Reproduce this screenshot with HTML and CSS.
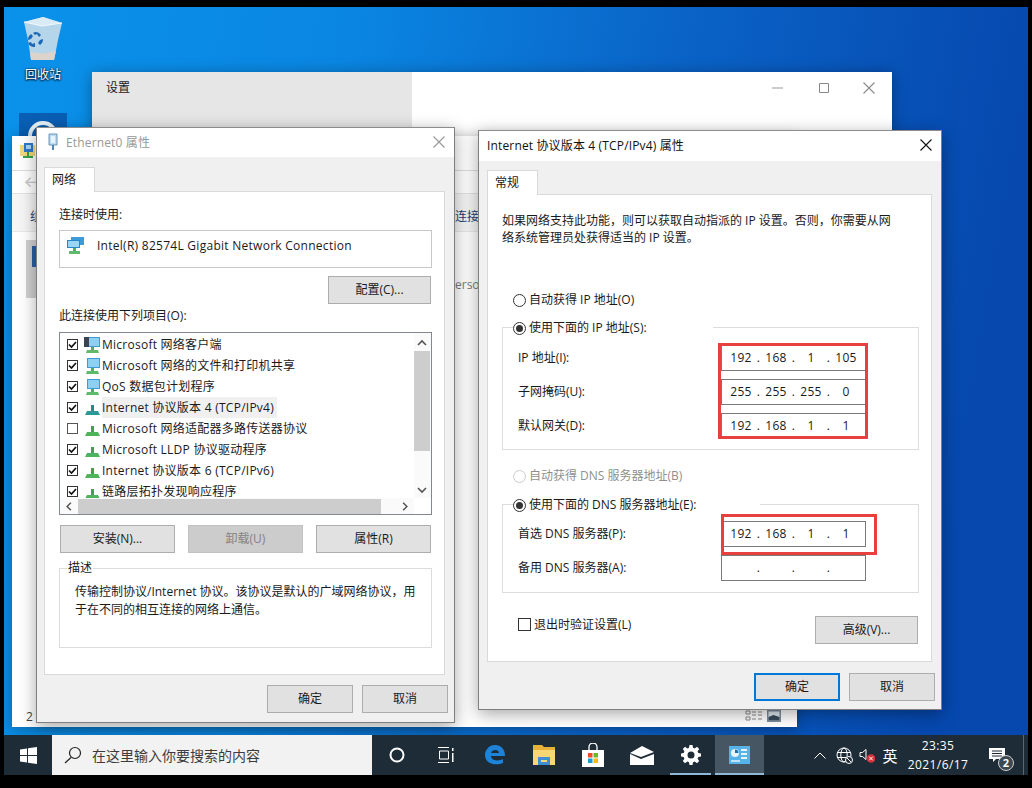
FILE: index.html
```html
<!DOCTYPE html>
<html lang="zh-CN">
  <head>
    <meta charset="UTF-8" />
    <title>Internet 协议版本 4 属性</title>
    <link rel="stylesheet" href="styles.css">
  </head>
  <body>
    <svg class="defs" width="0" height="0">
      <symbol id="i-proto" viewBox="0 0 16 16">
        <path d="M7 5h3v6H7z" fill="#3fa34d" />
        <path d="M3 11h11l2 4H1z" fill="#4fb35c" />
      </symbol>
      <symbol id="i-proto-on" viewBox="0 0 16 16">
        <path d="M7 5h3v6H7z" fill="#1f8f8a" />
        <path d="M3 11h11l2 4H1z" fill="#2a9a98" />
      </symbol>
      <symbol id="i-svc" viewBox="0 0 16 16">
        <path d="M3 0h13v10H3z" fill="#3d9bd8" />
        <path d="M4 1h11v8H4z" fill="#8ed0f2" />
        <path d="M7 10h3v3H7z" fill="#58a868" />
        <path d="M3 13h11l1 3H2z" fill="#5fbb6c" />
      </symbol>
      <symbol id="i-client" viewBox="0 0 16 16">
        <path d="M3 0h13v10H3z" fill="#3d9bd8" />
        <path d="M4 1h11v8H4z" fill="#8ed0f2" />
        <path d="M0 0h5v10H0z" fill="#3a4450" />
        <path d="M7 10h3v3H7z" fill="#58a868" />
        <path d="M3 13h11l1 3H2z" fill="#5fbb6c" />
      </symbol>
      <symbol id="i-up" viewBox="0 0 16 16"><path d="M4 10l4-4 4 4" fill="none" stroke="#555" stroke-width="1.6" /></symbol>
      <symbol id="i-down" viewBox="0 0 16 16"><path d="M4 6l4 4 4-4" fill="none" stroke="#555" stroke-width="1.6" /></symbol>
      <symbol id="i-left" viewBox="0 0 16 16"><path d="M10 4l-4 4 4 4" fill="none" stroke="#555" stroke-width="1.6" /></symbol>
      <symbol id="i-right" viewBox="0 0 16 16"><path d="M6 4l4 4-4 4" fill="none" stroke="#555" stroke-width="1.6" /></symbol>
      <symbol id="i-check" viewBox="0 0 11 11"><path d="M2 5.500l2.500 2.500L9 3" fill="none" stroke="#111" stroke-width="1.7" /></symbol>
      <symbol id="i-x" viewBox="0 0 14 14"><path d="M1.500 1.500l11 11M12.500 1.500l-11 11" fill="none" stroke="currentColor" stroke-width="1.1" /></symbol>
    </svg>

    <div class="desktop">
      <div class="desk-item recycle">
        <svg width="40" height="44" viewBox="0 0 40 44">
          <path d="M1 6L20 1l19 6-4 17-4 20H8L5 24z" fill="#b5d6ea" />
          <path d="M1 6l18 4 20-3-19-6z" fill="#d8ebf6" />
          <path d="M1 6l18 4 20-3" fill="none" stroke="#eef7fc" stroke-width="1.200" />
          <path d="M7 36c8 2 17 2 26-1l-2 9H8z" fill="#dcd3ca" />
          <path d="M12 16a7 7 0 0 1 6 3l-2 2-2-3-2 1-2-2zM20 23a7 7 0 0 1-3 6l-2-2 2-3zM12 31a7 7 0 0 1-7-4l3-1 1 2 3-1zM5 24a7 7 0 0 1 3-6l2 2-2 3z" fill="#1c68b8" />
        </svg>
        <span>回收站</span>
      </div>
      <div class="desk-item selected">
        <svg width="30" height="30" viewBox="0 0 30 30"><circle cx="15" cy="15" r="13" fill="none" stroke="#e8f4fb" stroke-width="4" /></svg>
      </div>

      <!-- windows behind the dialogs -->
      <div class="window settings">
        <div class="settings-side"><span>设置</span></div>
        <div class="settings-main">
          <div class="caption-btns">
            <svg width="16" height="16" viewBox="0 0 16 16"><path d="M2 8h11" stroke="#999" /></svg>
            <svg width="16" height="16" viewBox="0 0 16 16"><path d="M3.500 3.500h9v9h-9z" fill="none" stroke="#888" /></svg>
            <svg class="caption-x" width="14" height="14"><use href="#i-x" /></svg>
          </div>
        </div>
      </div>

      <div class="window panel">
        <div class="panel-title">
          <svg width="16" height="16" viewBox="0 0 16 16">
            <path d="M0 2h15v11H0z" fill="#f3d77a" />
            <path d="M4 0h9v9H4z" fill="#2f78c8" />
            <path d="M6 2h5v4H6z" fill="#a9d8f5" />
            <path d="M7 9h2v4H7z" fill="#37a34a" />
            <path d="M3 13h10v2H3z" fill="#37a34a" />
          </svg>
        </div>
        <div class="panel-nav"><span class="back">←</span></div>
        <div class="panel-band"><span>组</span><span class="band-link">连接此</span></div>
        <div class="panel-body">
          <div class="panel-thumb"><i></i></div>
          <span class="panel-person">erson</span>
        </div>
        <div class="panel-status">
          <span>2</span>
          <div class="view-btns">
            <svg width="18" height="12" viewBox="0 0 18 12"><path d="M1 1h4v3H1zM1 7h4v3H1z M7 2h4M13 2h4M7 5h4M13 5h4M7 9h4M13 9h4" fill="none" stroke="#8a8a8a" /></svg>
            <svg width="14" height="12" viewBox="0 0 14 12"><path d="M0 0h14v12H0z" fill="#7d8d9e" /><path d="M1.500 1.500h11v9h-11z" fill="#dfe8ef" /><path d="M1.500 7l5-2 6 2v3.500h-11z" fill="#39495a" /></svg>
          </div>
        </div>
      </div>

      <!-- Ethernet0 dialog -->
      <div class="window dialog eth">
        <div class="dialog-title inactive">
          <svg width="12" height="18" viewBox="0 0 12 18">
            <path d="M2 1h8v11H2z" fill="#b9dcf2" stroke="#6a94b4" />
            <path d="M4 3h4v7H4z" fill="#e6f4fc" />
            <path d="M5 12h2v5H5z" fill="#4f86b8" />
          </svg>
          <span class="title-text">Ethernet0 属性</span>
          <svg class="title-x" width="14" height="14"><use href="#i-x" /></svg>
        </div>
        <div class="dialog-body">
          <div class="tab">网络</div>
          <div class="page eth-page">
            <div class="label">连接时使用:</div>
            <div class="adapter">
              <svg width="18" height="17" viewBox="0 0 18 17">
                <path d="M4 0h13v8H4z" fill="#3d9bd8" />
                <path d="M0 3h13v8H0z" fill="#2a86c8" />
                <path d="M1 4h11v6H1z" fill="#9ad6f4" />
                <path d="M6 11h3v3H6z" fill="#58a868" />
                <path d="M2 14h11v3H2z" fill="#5fbb6c" />
              </svg>
              <span>Intel(R) 82574L Gigabit Network Connection</span>
            </div>
            <div class="right-row"><button class="btn btn-wide">配置(C)...</button></div>
            <div class="label list-label">此连接使用下列项目(O):</div>

            <div class="listbox">
              <ul class="items">
                <li><span class="check on"><svg width="11" height="11"><use href="#i-check" /></svg></span><svg class="item-icon" width="16" height="16"><use href="#i-client" /></svg><span class="item-text">Microsoft 网络客户端</span></li>
                <li><span class="check on"><svg width="11" height="11"><use href="#i-check" /></svg></span><svg class="item-icon" width="16" height="16"><use href="#i-svc" /></svg><span class="item-text">Microsoft 网络的文件和打印机共享</span></li>
                <li><span class="check on"><svg width="11" height="11"><use href="#i-check" /></svg></span><svg class="item-icon" width="16" height="16"><use href="#i-svc" /></svg><span class="item-text">QoS 数据包计划程序</span></li>
                <li><span class="check on"><svg width="11" height="11"><use href="#i-check" /></svg></span><svg class="item-icon" width="16" height="16"><use href="#i-proto-on" /></svg><span class="item-text current">Internet 协议版本 4 (TCP/IPv4)</span></li>
                <li><span class="check"></span><svg class="item-icon" width="16" height="16"><use href="#i-proto" /></svg><span class="item-text">Microsoft 网络适配器多路传送器协议</span></li>
                <li><span class="check on"><svg width="11" height="11"><use href="#i-check" /></svg></span><svg class="item-icon" width="16" height="16"><use href="#i-proto" /></svg><span class="item-text">Microsoft LLDP 协议驱动程序</span></li>
                <li><span class="check on"><svg width="11" height="11"><use href="#i-check" /></svg></span><svg class="item-icon" width="16" height="16"><use href="#i-proto" /></svg><span class="item-text">Internet 协议版本 6 (TCP/IPv6)</span></li>
                <li><span class="check on"><svg width="11" height="11"><use href="#i-check" /></svg></span><svg class="item-icon" width="16" height="16"><use href="#i-proto" /></svg><span class="item-text">链路层拓扑发现响应程序</span></li>
              </ul>
              <div class="vscroll">
                <svg width="16" height="16"><use href="#i-up" /></svg>
                <div class="vthumb"></div>
                <svg class="vdown" width="16" height="16"><use href="#i-down" /></svg>
              </div>
              <div class="hscroll">
                <svg width="16" height="15"><use href="#i-left" /></svg>
                <div class="hthumb"></div>
                <svg class="hright" width="16" height="15"><use href="#i-right" /></svg>
              </div>
              <div class="corner"></div>
            </div>

            <div class="list-btns">
              <button class="btn">安装(N)...</button>
              <button class="btn disabled">卸载(U)</button>
              <button class="btn">属性(R)</button>
            </div>

            <fieldset class="desc">
              <legend>描述</legend>
              <p>传输控制协议/Internet 协议。该协议是默认的广域网络协议，用<br />于在不同的相互连接的网络上通信。</p>
            </fieldset>
          </div>
          <div class="dialog-foot">
            <button class="btn btn-foot">确定</button>
            <button class="btn btn-foot">取消</button>
          </div>
        </div>
      </div>

      <!-- IPv4 dialog -->
      <div class="window dialog ipv4">
        <div class="dialog-title">
          <span class="title-text">Internet 协议版本 4 (TCP/IPv4) 属性</span>
          <svg class="title-x" width="14" height="14"><use href="#i-x" /></svg>
        </div>
        <div class="dialog-body">
          <div class="tab">常规</div>
          <div class="page ip-page">
            <p class="intro">如果网络支持此功能，则可以获取自动指派的 IP 设置。否则，你需要从网<br />络系统管理员处获得适当的 IP 设置。</p>

            <div class="radio-row first"><span class="radio"></span>自动获得 IP 地址(O)</div>
            <fieldset class="group ip-group">
              <legend class="ip-legend"><span class="radio on"></span>使用下面的 IP 地址(S):</legend>
              <div class="field-grid">
                <span>IP 地址(I):</span>
                <div class="ip-input"><b>192</b><i>.</i><b>168</b><i>.</i><b>1</b><i>.</i><b>105</b></div>
                <span>子网掩码(U):</span>
                <div class="ip-input"><b>255</b><i>.</i><b>255</b><i>.</i><b>255</b><i>.</i><b>0</b></div>
                <span>默认网关(D):</span>
                <div class="ip-input"><b>192</b><i>.</i><b>168</b><i>.</i><b>1</b><i>.</i><b>1</b></div>
              </div>
            </fieldset>

            <div class="radio-row dns-auto disabled-text"><span class="radio off"></span>自动获得 DNS 服务器地址(B)</div>
            <fieldset class="group dns-group">
              <legend class="dns-legend"><span class="radio on"></span>使用下面的 DNS 服务器地址(E):</legend>
              <div class="field-grid">
                <span>首选 DNS 服务器(P):</span>
                <div class="ip-input"><b>192</b><i>.</i><b>168</b><i>.</i><b>1</b><i>.</i><b>1</b></div>
                <span>备用 DNS 服务器(A):</span>
                <div class="ip-input"><b></b><i>.</i><b></b><i>.</i><b></b><i>.</i><b></b></div>
              </div>
            </fieldset>

            <div class="ip-bottom">
              <label class="validate"><span class="check big"></span>退出时验证设置(L)</label>
              <button class="btn btn-wide">高级(V)...</button>
            </div>
          </div>
          <div class="dialog-foot">
            <button class="btn btn-foot default">确定</button>
            <button class="btn btn-foot">取消</button>
          </div>
        </div>

        <div class="mark mark-ip"></div>
        <div class="mark mark-dns"></div>
      </div>

      <div class="desk-fill"></div>

      <div class="taskbar">
        <div class="start">
          <svg width="17" height="17" viewBox="0 0 17 17"><path d="M0 2.500l7-1v6.500H0zM8 1.300L17 0v8H8zM0 9h7v6.500l-7-1zM8 9h9v8l-9-1.300z" fill="#fff" /></svg>
        </div>
        <div class="search">
          <svg width="18" height="18" viewBox="0 0 18 18"><circle cx="11" cy="7" r="5.500" fill="none" stroke="#222" stroke-width="1.200" /><path d="M7 11.500L1 17" stroke="#222" stroke-width="1.200" /></svg>
          <span>在这里输入你要搜索的内容</span>
        </div>
        <div class="task-icons">
          <div class="task"><svg width="16" height="16" viewBox="0 0 16 16"><circle cx="8" cy="8" r="6.500" fill="none" stroke="#fff" stroke-width="2" /></svg></div>
          <div class="task"><svg width="17" height="16" viewBox="0 0 17 16"><path d="M1 .5h11M1 15.500h11M2.500 4h9v8h-9z" fill="none" stroke="#fff" /><path d="M15 1h1.500v3H15zM15 6h1.500v9H15z" fill="#fff" /></svg></div>
          <div class="task"><svg width="20" height="20" viewBox="0 0 20 20"><path d="M10 0c6 0 10 4 10 11H6c0 4 6 6 12 3v4c-7 3-18 1-18-8C0 5 4 0 10 0zM6 8h8c0-4-7-4-8 0z" fill="#1c83d8" /></svg></div>
          <div class="task"><svg width="22" height="20" viewBox="0 0 22 20"><path d="M0 0h9l2 2h11v3H0z" fill="#e8b23a" /><path d="M0 5h22v15H0z" fill="#f7d774" /><path d="M5 12h12v8H5z" fill="#3f8fd6" /><path d="M8 15h6v2H8z" fill="#f7d774" /></svg></div>
          <div class="task"><svg width="22" height="24" viewBox="0 0 22 24"><path d="M7 7V4a4 4 0 0 1 8 0v3" fill="none" stroke="#fff" stroke-width="1.300" /><path d="M0 7h22v17H0z" fill="#fff" /><path d="M6 10h4.500v4.500H6z" fill="#e8502a" /><path d="M11.500 10H16v4.500h-4.500z" fill="#6db52e" /><path d="M6 15.500h4.500V20H6z" fill="#1d9ad6" /><path d="M11.500 15.500H16V20h-4.500z" fill="#f5b81c" /></svg></div>
          <div class="task"><svg width="24" height="19" viewBox="0 0 24 19"><path d="M0 7L12 0l12 6-13 5z" fill="#fff" /><path d="M0 8l11 5 13-5v11H0z" fill="#fff" /></svg></div>
          <div class="task running"><svg width="20" height="20" viewBox="0 0 20 20"><path fill="#fff" fill-rule="evenodd" d="M8.500 0h3l.5 2.700 1.700.7L16 1.800 18.200 4l-1.600 2.300.7 1.700 2.700.5v3l-2.700.5-.7 1.700 1.600 2.300-2.200 2.200-2.300-1.600-1.700.7-.5 2.700h-3L8 17.300l-1.700-.7L4 18.200 1.800 16l1.600-2.300-.7-1.700L0 11.500v-3L2.700 8l.7-1.700L1.800 4 4 1.800l2.300 1.600L8 2.700zM10 6.500a3.500 3.500 0 1 0 0 7 3.500 3.500 0 0 0 0-7z" /></svg></div>
          <div class="task active"><svg width="21" height="18" viewBox="0 0 21 18"><path d="M0 0h21v18H0z" fill="#56b4ea" /><circle cx="6" cy="7" r="4" fill="#e8f4fb" /><path d="M6 3.500V7h3.500A3.500 3.500 0 0 0 6 3.500z" fill="#1b6fb8" /><path d="M12 3h6v2h-6zM12 7h6v2h-6zM12 11h6v2h-6z" fill="#e8f4fb" /><path d="M2 14h9v2H2z" fill="#bfe3f7" /></svg></div>
        </div>
        <div class="tray">
          <div class="tray-item t-chev"><svg width="12" height="7" viewBox="0 0 12 7"><path d="M.5 6.500L6 1l5.500 5.500" fill="none" stroke="#fff" /></svg></div>
          <div class="tray-item t-globe"><svg width="17" height="17" viewBox="0 0 17 17"><g fill="none" stroke="#fff"><circle cx="8" cy="8" r="7" /><ellipse cx="8" cy="8" rx="3.200" ry="7" /><path d="M1 5.500h14M1 10.500h14" /></g><circle cx="13" cy="13" r="3.500" fill="#1e2b37" stroke="#fff" /><path d="M11 11l4 4" stroke="#fff" /></svg></div>
          <div class="tray-item t-vol"><svg width="16" height="16" viewBox="0 0 16 16"><path d="M1 5.500h2.500L7 2.500v10l-3.500-3H1z" fill="none" stroke="#fff" /><circle cx="12" cy="11.500" r="4.300" fill="#d8313a" /><path d="M10.200 9.700l3.600 3.600M13.800 9.700l-3.600 3.600" stroke="#fff" /></svg></div>
          <div class="tray-item t-ime">英</div>
          <div class="clock"><span>23:35</span><span>2021/6/17</span></div>
          <div class="tray-item t-note">
            <svg width="16" height="15" viewBox="0 0 16 15"><path d="M0 0h16v11H7l-3 3v-3H0z" fill="#fff" /><path d="M3 3h10M3 5.500h10M3 8h10" stroke="#1e2b37" /></svg>
            <span class="note-badge">2</span>
          </div>
          <div class="show-desktop"></div>
        </div>
      </div>
    </div>
  </body>
</html>
```

FILE: styles.css
```css
* {
  box-sizing: border-box;
}
html,
body {
  height: 100%;
}
body {
  margin: 0;
  padding: 7px 4px 13px 4px;
  background: #000;
  font-family: "Open Sans", "Noto Sans CJK SC", sans-serif;
  font-size: 12px;
  color: #1a1a1a;
  overflow: hidden;
}
.defs {
  position: absolute;
}
.desktop {
  position: relative;
  width: 1024px;
  height: 768px;
  display: flex;
  flex-direction: column;
  overflow: hidden;
  background: linear-gradient(100deg, #0a92ea 0%, #0a86e2 30%, #0a62c6 60%, #0648ae 90%);
}
.desk-fill {
  flex: 1;
}

/* desktop icons */
.desk-item {
  position: absolute;
  display: flex;
  flex-direction: column;
  align-items: center;
}
.recycle {
  left: 18px;
  top: 9px;
  width: 42px;
  color: #fff;
  text-shadow: 0 0 2px #000, 0 1px 2px #000;
}
.recycle span {
  margin-top: 7px;
  line-height: 16px;
}
.selected {
  left: 15px;
  top: 106px;
  width: 48px;
  height: 40px;
  padding-top: 8px;
  background: #0a5fb4;
}

/* windows are placed on the desktop */
.window {
  position: absolute;
}
.settings {
  left: 88px;
  top: 65px;
  width: 800px;
  height: 620px;
  display: flex;
  background: #fff;
  box-shadow: 0 2px 14px rgba(0, 0, 0, 0.35);
}
.settings-side {
  width: 320px;
  background: #e6e6e6;
  padding: 8px 14px;
  font-size: 12px;
  line-height: 16px;
}
.settings-main {
  flex: 1;
}
.caption-btns {
  display: flex;
  justify-content: flex-end;
  gap: 30px;
  padding: 8px 16px 0 0;
  color: #8a8a8a;
}
.caption-x {
  margin-top: 1px;
}

.panel {
  left: 8px;
  top: 129px;
  width: 785px;
  height: 591px;
  display: flex;
  flex-direction: column;
  background: #fff;
  box-shadow: 0 2px 14px rgba(0, 0, 0, 0.3);
}
.panel-title {
  height: 35px;
  padding: 7px 8px;
  border-bottom: 1px solid #dcdcdc;
}
.panel-nav {
  height: 23px;
  padding-left: 12px;
  color: #c8c8c8;
  font-size: 20px;
  line-height: 24px;
  border-bottom: 1px solid #e2e2e2;
}
.panel-band {
  height: 38px;
  background: #f5f5f5;
  border-bottom: 1px solid #e8e8e8;
  display: flex;
  justify-content: space-between;
  padding: 15px 0 0 18px;
  color: #1c3f70;
  line-height: 16px;
}
.band-link {
  margin-right: 306px;
}
.panel-body {
  flex: 1;
  position: relative;
  padding: 8px 0 0 14px;
}
.panel-thumb {
  width: 30px;
  height: 58px;
  padding-top: 6px;
  background: #d0d0d0;
}
.panel-thumb i {
  display: block;
  width: 5px;
  height: 21px;
  margin-left: 6px;
  background: #2c5ea8;
}
.panel-person {
  position: absolute;
  left: 443px;
  top: 44px;
  color: #7a7a7a;
}
.panel-status {
  height: 20px;
  display: flex;
  justify-content: space-between;
  align-items: center;
  padding: 0 0 2px 14px;
  color: #444;
}
.view-btns {
  display: flex;
  gap: 4px;
  padding-right: 16px;
}

/* property dialogs */
.dialog {
  display: flex;
  flex-direction: column;
  background: #f0f0f0;
  border: 1px solid #7f7f7f;
  border-top-color: #8c8c8c;
  box-shadow: 0 4px 16px rgba(0, 0, 0, 0.35);
}
.eth {
  left: 32px;
  top: 120px;
  width: 419px;
  height: 596px;
}
.ipv4 {
  left: 474px;
  top: 123px;
  width: 464px;
  height: 580px;
}
.dialog-title {
  height: 30px;
  flex: none;
  display: flex;
  align-items: center;
  gap: 7px;
  padding: 0 8px 2px;
  background: #fff;
  color: #111;
}
.eth .dialog-title {
  height: 29px;
  padding-left: 10px;
  color: #999;
}
.title-text {
  flex: 1;
  letter-spacing: 0.15px;
}
.title-x {
  color: #111;
}
.inactive .title-x {
  color: #999;
}
.dialog-body {
  flex: 1;
  padding: 10px 6px 0 7px;
}
.ipv4 .dialog-body {
  padding: 9px 6px 0 8px;
}
.tab {
  position: relative;
  z-index: 1;
  width: 51px;
  height: 25px;
  padding-left: 7px;
  line-height: 23px;
  background: #fff;
  border: 1px solid #d9d9d9;
  border-bottom: none;
}
.page {
  margin: -1px 3px 0 0;
  background: #fff;
  border: 1px solid #d9d9d9;
}
.eth-page {
  height: 484px;
  padding: 15px 12px 0 14px;
}
.ip-page {
  height: 468px;
  padding: 17px 12px 0 14px;
}
.label {
  line-height: 16px;
}
.adapter {
  height: 38px;
  margin-top: 7px;
  padding: 0 0 8px 7px;
  display: flex;
  align-items: center;
  gap: 12px;
  border: 1px solid #c8c8c8;
}
.adapter span {
  letter-spacing: 0.27px;
}
.right-row {
  display: flex;
  justify-content: flex-end;
  margin: 8px 1px 0 0;
}
.list-label {
  margin-top: 4px;
}

.btn {
  height: 28px;
  padding: 0 0 2px;
  font: inherit;
  color: #1a1a1a;
  background: #e1e1e1;
  border: 1px solid #adadad;
}
.btn-wide {
  width: 103px;
}
.btn.disabled {
  background: #ccc;
  border-color: #c2c2c2;
  color: #838383;
}
.btn.default {
  border: 2px solid #0078d7;
}

/* item list with its scroll bars */
.listbox {
  height: 183px;
  margin-top: 8px;
  border: 1px solid #828790;
  display: grid;
  grid-template-columns: 1fr 17px;
  grid-template-rows: 1fr 16px;
}
.items {
  list-style: none;
  margin: 0;
  padding: 1px 0 0 7px;
  overflow: hidden;
}
.items li {
  height: 21px;
  display: flex;
  align-items: center;
}
.check {
  flex: none;
  width: 11px;
  height: 11px;
  border: 1px solid #555;
  background: #fff;
  display: block;
}
.check.on {
  border-color: #333;
}
.check svg {
  display: block;
  margin: -1px;
}
.item-icon {
  flex: none;
  margin-left: 6px;
}
.item-text {
  margin-left: 2px;
  padding: 0 3px 0 0;
  line-height: 21px;
  height: 21px;
  letter-spacing: 0.25px;
  white-space: nowrap;
}
.item-text.current {
  background: #f0f0f0;
}
.vscroll {
  display: flex;
  flex-direction: column;
  background: #fafafa;
}
.vscroll svg {
  flex: none;
  margin: 2px 0 0;
}
.vthumb {
  height: 100px;
  width: 16px;
  background: #cdcdcd;
}
.vdown {
  margin-top: auto !important;
  margin-bottom: 0;
}
.hscroll {
  display: flex;
  align-items: center;
  background: #fafafa;
  padding-left: 1px;
}
.hthumb {
  width: 303px;
  height: 15px;
  margin-left: 1px;
  background: #cdcdcd;
}
.hright {
  margin-left: auto;
  margin-right: 1px;
}
.corner {
  background: #fff;
}
.list-btns {
  display: grid;
  grid-template-columns: repeat(3, 115px);
  justify-content: space-between;
  margin: 10px 1px 0 1px;
}
.desc {
  height: 88px;
  margin: 7px 0 0 0;
  padding: 0;
  border: 1px solid #dcdcdc;
}
.desc legend {
  margin-left: 7px;
  padding: 0 1px;
  line-height: 16px;
}
.desc p {
  margin: 7px 0 0 15px;
  line-height: 18px;
  white-space: nowrap;
}
.dialog-foot {
  display: flex;
  justify-content: flex-end;
  gap: 9px;
  margin-top: 11px;
}
.eth .dialog-foot {
  margin-top: 10px;
}
.btn-foot {
  width: 86px;
}

/* IPv4 page */
.intro {
  margin: 0;
  line-height: 17px;
  white-space: nowrap;
}
.radio-row {
  display: flex;
  align-items: center;
  gap: 3px;
  height: 16px;
  padding-left: 11px;
}
.radio-row.first {
  margin-top: 45px;
}
.dns-auto {
  margin-top: 17px;
}
.disabled-text {
  color: #8f8f8f;
}
.radio {
  flex: none;
  position: relative;
  width: 13px;
  height: 13px;
  border: 1px solid #333;
  border-radius: 50%;
  background: #fff;
  margin-top: 2px;
}
.radio.off {
  border-color: #ccc;
}
.radio.on::after {
  content: "";
  position: absolute;
  left: 2px;
  top: 2px;
  width: 7px;
  height: 7px;
  border-radius: 50%;
  background: #333;
}
.group {
  margin: 12px 0 0;
  padding: 10px 0 0;
  border: 1px solid #dcdcdc;
  width: 417px;
  min-width: 0;
}
.ip-group {
  height: 131px;
}
.dns-group {
  height: 97px;
  margin-top: 13px;
  padding-top: 9px;
}
.group legend {
  display: flex;
  align-items: center;
  gap: 3px;
  height: 16px;
  margin-left: 10px;
  padding: 0;
  background: #fff;
}
.ip-legend {
  width: 200px;
}
.dns-legend {
  width: 247px;
}
.field-grid {
  display: grid;
  grid-template-columns: 203px 145px;
  row-gap: 8px;
  align-items: center;
  margin-left: 15px;
}
.field-grid > span {
  padding-bottom: 2px;
}
.ip-input {
  height: 26px;
  padding: 0 0 2px 5px;
  display: grid;
  grid-template-columns: 28px 7px 28px 7px 28px 7px 28px;
  align-items: center;
  text-align: center;
  background: #fff;
  border: 1px solid #7a7a7a;
  letter-spacing: 0.3px;
}
.ip-input b,
.ip-input i {
  font-weight: normal;
  font-style: normal;
}
.ip-bottom {
  display: flex;
  justify-content: space-between;
  align-items: flex-start;
  width: 416px;
  margin-top: 23px;
  padding-left: 16px;
}
.validate {
  display: flex;
  align-items: center;
  gap: 3px;
  margin-top: 2px;
  line-height: 13px;
}
.check.big {
  width: 13px;
  height: 13px;
  border-color: #333;
}

/* red marks on top of the dialog */
.mark {
  position: absolute;
  border: 3px solid #e8403f;
  pointer-events: none;
}
.mark-ip {
  left: 239px;
  top: 212px;
  width: 150px;
  height: 96px;
}
.mark-dns {
  left: 242px;
  top: 383px;
  width: 156px;
  height: 41px;
}

/* taskbar */
.taskbar {
  position: relative;
  height: 40px;
  display: flex;
  color: #fff;
  background: #1e2c38;
}
.start {
  width: 48px;
  display: flex;
  align-items: center;
  justify-content: center;
}
.search {
  width: 320px;
  display: flex;
  align-items: center;
  gap: 10px;
  padding-left: 12px;
  background: #f2f2f2;
  color: #3c3c3c;
  font-size: 14px;
}
.task-icons {
  display: flex;
}
.task {
  width: 49px;
  display: flex;
  align-items: center;
  justify-content: center;
  position: relative;
}
.task.running::after,
.task.active::after {
  content: "";
  position: absolute;
  left: 4px;
  right: 4px;
  bottom: 0;
  height: 2px;
  background: #8fb8d8;
}
.task.active {
  background: #465663;
}
.task.active::after {
  left: 0;
  right: 0;
}
.tray {
  margin-left: auto;
  display: flex;
  align-items: center;
}
.tray-item {
  display: flex;
  align-items: center;
  justify-content: center;
}
.t-chev {
  width: 24px;
}
.t-globe {
  width: 24px;
}
.t-vol {
  width: 22px;
}
.t-ime {
  width: 24px;
  font-size: 15px;
}
.clock {
  width: 72px;
  display: flex;
  flex-direction: column;
  align-items: center;
  line-height: 19px;
  letter-spacing: 0.4px;
}
.t-note {
  width: 49px;
  padding-right: 3px;
  position: relative;
}
.note-badge {
  position: absolute;
  left: 24px;
  top: 7px;
  width: 16px;
  height: 16px;
  border: 1px solid #cfcfcf;
  border-radius: 50%;
  background: #3d4850;
  font-size: 11px;
  font-weight: bold;
  line-height: 14px;
  text-align: center;
}
.show-desktop {
  width: 5px;
  height: 40px;
  border-left: 1px solid #5a6670;
}
```
